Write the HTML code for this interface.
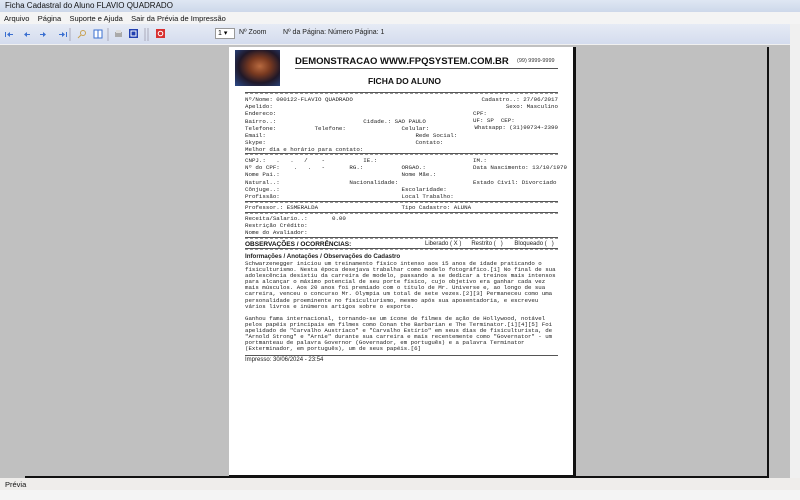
<!DOCTYPE html>
<html><head><meta charset="utf-8"><style>
*{margin:0;padding:0;box-sizing:border-box}
body{width:800px;height:500px;overflow:hidden;background:#f0f0f0;font-family:"Liberation Sans",sans-serif;position:relative}
.a{position:absolute;white-space:pre}
.m{font-family:"Liberation Mono",monospace;font-size:5.8px;color:#222;line-height:7.2px}
.ln{position:absolute;left:245px;width:313px;height:2px;border-top:1px solid #555;border-bottom:1px dashed #999}
.p{font-family:"Liberation Mono",monospace;font-size:5.75px;color:#222;line-height:6.1px;left:245px;width:320px;white-space:pre}
</style></head><body>
<div class="a" style="left:0;top:0;width:800px;height:12px;background:linear-gradient(#dfe7f3,#cdd8ea)"></div>
<div class="a" style="left:5px;top:1px;font-size:8px;color:#111">Ficha Cadastral do Aluno FLAVIO QUADRADO</div>
<div class="a" style="left:0;top:12px;width:800px;height:12px;background:#f4f4f4"></div>
<div class="a" style="left:4px;top:14px;font-size:7.5px;color:#111">Arquivo    Página    Suporte e Ajuda    Sair da Prévia de Impressão</div>
<div class="a" style="left:0;top:24px;width:790px;height:20px;background:linear-gradient(#e6ebf5,#d4dcee)"></div>
<svg class="a" style="left:0;top:24px" width="180" height="20">
<g fill="#3a6fd0"><rect x="5" y="8" width="1" height="5"/><path d="M7 10.5l3-2.5v5z M10 10h3v1h-3z"/>
<path d="M24 10.5l3-2.5v5z M27 10h3v1h-3z"/><path d="M46 10.5l-3-2.5v5z M40 10h3v1h-3z"/>
<path d="M65 10.5l-3-2.5v5z M59 10h3v1h-3z"/><rect x="66" y="8" width="1" height="5"/></g>
<line x1="70" y1="4" x2="70" y2="17" stroke="#aab"/>
<circle cx="83" cy="9" r="2.5" fill="none" stroke="#c8a050"/><line x1="81" y1="11" x2="78" y2="14" stroke="#c8a050"/>
<rect x="94" y="6" width="8" height="8" fill="#fff" stroke="#3a6fd0"/><line x1="98" y1="6" x2="98" y2="14" stroke="#3a6fd0"/>
<line x1="108" y1="4" x2="108" y2="17" stroke="#aab"/>
<rect x="115" y="8" width="7" height="5" fill="#aaa"/><rect x="116" y="6" width="5" height="3" fill="#ddd"/>
<rect x="129" y="5" width="9" height="9" fill="#2240b0"/><rect x="131" y="7" width="5" height="5" fill="none" stroke="#fff"/>
<line x1="145" y1="4" x2="145" y2="17" stroke="#aab"/><line x1="148" y1="4" x2="148" y2="17" stroke="#aab"/>
<rect x="156" y="5" width="9" height="9" fill="#d83030"/><circle cx="160.5" cy="9.5" r="2.3" fill="none" stroke="#fff"/>
</svg>
<div class="a" style="left:215px;top:28px;width:20px;height:11px;background:#fff;border:1px solid #999;font-size:7px;padding-left:2px">1 ▾</div>
<div class="a" style="left:239px;top:29px;font-size:7px;color:#222">Nº Zoom</div>
<div class="a" style="left:283px;top:29px;font-size:7px;color:#222">Nº da Página: Número Página: 1</div>
<div class="a" style="left:0;top:45px;width:790px;height:433px;background:#c0c0c0"></div>
<div class="a" style="left:790px;top:45px;width:10px;height:433px;background:#f0f0f0"></div>
<div class="a" style="left:767px;top:47px;width:2px;height:431px;background:#111"></div>
<div class="a" style="left:25px;top:476px;width:744px;height:2px;background:#111"></div>
<div class="a" style="left:0;top:478px;width:800px;height:12px;background:#efedeb"></div>
<div class="a" style="left:5px;top:480px;font-size:7.5px;color:#111">Prévia</div>
<div class="a" style="left:0;top:490px;width:800px;height:10px;background:#f4f4f4"></div>
<div class="a" style="left:229px;top:47px;width:347px;height:431px;background:#111"></div>
<div class="a" style="left:229px;top:47px;width:344px;height:428px;background:#fff"></div>
<div class="a" style="left:235px;top:50px;width:45px;height:36px;background:radial-gradient(ellipse at 55% 45%,#b86a40 0,#7a3a20 30%,#201828 60%,#2a4a8a 100%)"></div>
<div class="a" style="left:295px;top:56px;font-size:9.5px;font-weight:bold;color:#111">DEMONSTRACAO WWW.FPQSYSTEM.COM.BR</div>
<div class="a" style="left:517px;top:58px;font-size:5.5px;color:#333">(99) 9999-9999</div>
<div class="ln" style="left:295px;width:263px;top:68px;height:1px;border-bottom:0"></div>
<div class="a" style="left:368px;top:76px;font-size:8.5px;font-weight:bold;color:#111">FICHA DO ALUNO</div>
<div class="ln" style="top:92px"></div>
<div class="a m" style="left:245px;top:96px">Nº/Nome: 000122-FLAVIO QUADRADO
Apelido:
Endereco:
Bairro..:                         Cidade.: SAO PAULO
Telefone:           Telefone:                Celular:
Email:                                           Rede Social:
Skype:                                           Contato:
Melhor dia e horário para contato:</div>
<div class="a m" style="right:242px;top:96px;text-align:right">Cadastro..: 27/06/2017
Sexo: Masculino
</div>
<div class="a m" style="left:473px;top:110px">CPF:
UF: SP  CEP:</div>
<div class="a m" style="right:242px;top:124px;text-align:right">Whatsapp: (31)99734-2390</div>
<div class="ln" style="top:153px"></div>
<div class="a m" style="left:245px;top:157px">CNPJ.:   .   .   /    -           IE.:
Nº do CPF:    .   .   -       RG.:           ORGAO.:
Nome Pai.:                                   Nome Mãe.:
Natural..:                    Nacionalidade:
Cônjuge..:                                   Escolaridade:
Profissão:                                   Local Trabalho:</div>
<div class="a m" style="left:473px;top:157px">IM.:
Data Nascimento: 13/10/1979

Estado Civil: Divorciado</div>
<div class="ln" style="top:201px"></div>
<div class="a m" style="left:245px;top:204px">Professor.: ESMERALDA                        Tipo Cadastro: ALUNA</div>
<div class="ln" style="top:212px"></div>
<div class="a m" style="left:245px;top:215px">Receita/Salario..:       0.00
Restrição Crédito:
Nome do Avaliador:</div>
<div class="ln" style="top:237px"></div>
<div class="a" style="left:245px;top:241px;font-size:6.5px;font-weight:bold;color:#111">OBSERVAÇÕES / OCORRÊNCIAS:</div>
<div class="a" style="left:425px;top:241px;font-size:6px;color:#222">Liberado ( X )      Restrito (   )       Bloqueado (   )</div>
<div class="ln" style="top:248px"></div>
<div class="a" style="left:245px;top:253px;font-size:6.2px;font-weight:bold;color:#222">Informações / Anotações / Observações do Cadastro</div>
<div class="a p" style="top:261px">Schwarzenegger iniciou um treinamento físico intenso aos 15 anos de idade praticando o
fisiculturismo. Nesta época desejava trabalhar como modelo fotográfico.[1] No final de sua
adolescência desistiu da carreira de modelo, passando a se dedicar a treinos mais intensos
para alcançar o máximo potencial de seu porte físico, cujo objetivo era ganhar cada vez
mais músculos. Aos 20 anos foi premiado com o título de Mr. Universe e, ao longo de sua
carreira, venceu o concurso Mr. Olympia um total de sete vezes.[2][3] Permaneceu como uma
personalidade proeminente no fisiculturismo, mesmo após sua aposentadoria, e escreveu
vários livros e inúmeros artigos sobre o esporte.

Ganhou fama internacional, tornando-se um ícone de filmes de ação de Hollywood, notável
pelos papéis principais em filmes como Conan the Barbarian e The Terminator.[1][4][5] Foi
apelidado de "Carvalho Austríaco" e "Carvalho Estírio" em seus dias de fisiculturista, de
"Arnold Strong" e "Arnie" durante sua carreira e mais recentemente como "Governator" - um
portmanteau de palavra Governor (Governador, em português) e a palavra Terminator
(Exterminador, em português), um de seus papéis.[6]</div>
<div class="ln" style="top:355px;height:1px;border-bottom:0"></div>
<div class="a" style="left:245px;top:357px;font-size:6px;color:#222">Impresso: 30/06/2024 - 23:54</div>
</body></html>
